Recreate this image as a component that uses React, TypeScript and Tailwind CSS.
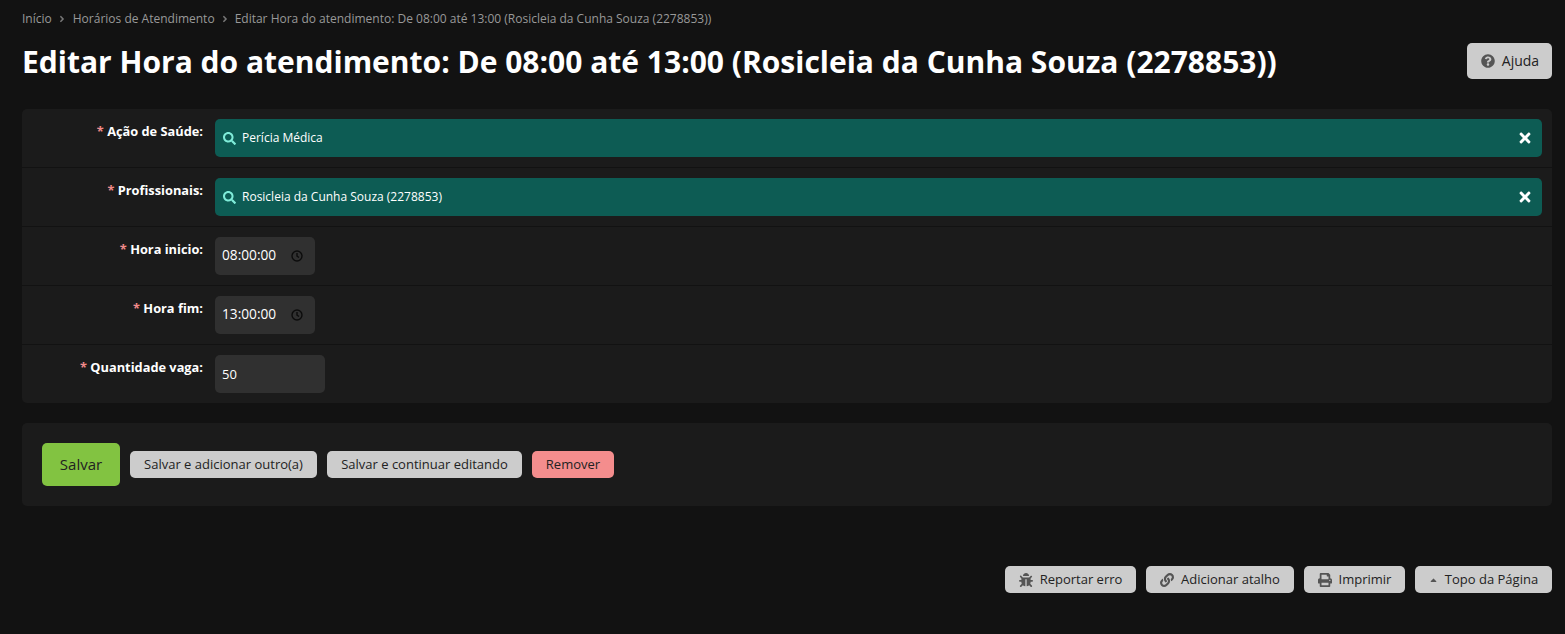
import React from "react";
import { FaSearch, FaTimes, FaQuestionCircle, FaBug, FaLink, FaPrint, FaCaretUp, FaAngleRight } from "react-icons/fa";

function Label({ text }: { text: string }) {
  return (
    <div className="w-[181px] shrink-0 text-right text-[12.8px] font-bold leading-[20px] text-white pt-[2px]">
      <span className="text-[#f08a8a]">* </span>
      {text}:
    </div>
  );
}

function Lookup({ text }: { text: string }) {
  return (
    <div className="flex-1 h-[38px] rounded-[5px] bg-[#0d5c54] flex items-center pl-[8px] pr-[9px] text-[12px] text-white">
      <FaSearch className="text-[#7fecd9] w-[13px] h-[13px] mr-[6px]" />
      <span className="flex-1">{text}</span>
      <FaTimes className="text-white w-[16px] h-[16px]" />
    </div>
  );
}

function Time({ value }: { value: string }) {
  return (
    <div className="w-[100px] h-[38px] rounded-[5px] bg-[#303030] flex items-center pl-[7px] text-[13.7px] text-white">
      <span className="w-[69px] pb-[1px]">{value}</span>
      <svg viewBox="0 0 12 12" className="w-[12px] h-[12px]" fill="none" stroke="#0c0c0c" strokeWidth="1.4">
        <circle cx="6" cy="6" r="5" />
        <path d="M6 3v3.2l2 1.3" />
      </svg>
    </div>
  );
}

function Row({ label, children, last }: { label: string; children: React.ReactNode; last?: boolean }) {
  return (
    <div className={`flex gap-[12px] px-0 pt-[10px] pb-[10px] ${last ? "" : "border-b border-[#121212]"}`}>
      <Label text={label} />
      {children}
    </div>
  );
}

export default function App() {
  const foot = "h-[27px] rounded-[5px] bg-[#cccccc] flex items-center justify-center gap-[7px] text-[13px] text-[#222222]";
  return (
    <div className="min-h-[634px] bg-[#121212] px-[22px] pr-[13px] font-['Open_Sans',sans-serif] overflow-hidden">
      <div className="flex items-center pt-[11px] h-[27px] text-[12px] text-[#999999]">
        <span>Início</span>
        <FaAngleRight className="ml-[5px] mr-[6px] w-[10px] h-[10px] text-[#777777]" />
        <span>Horários de Atendimento</span>
        <FaAngleRight className="mx-[5px] w-[10px] h-[10px] text-[#777777]" />
        <span>Editar Hora do atendimento: De 08:00 até 13:00 (Rosicleia da Cunha Souza (2278853))</span>
      </div>
      <div className="flex items-start justify-between pt-[16px] h-[82px]">
        <h1 className="text-[30px] font-bold leading-[38px] text-white">
          Editar Hora do atendimento: De 08:00 até 13:00 (Rosicleia da Cunha Souza (2278853))
        </h1>
        <div className="h-[36px] w-[85px] rounded-[5px] bg-[#cccccc] flex items-center justify-center gap-[7px] pl-[1px] text-[14px] text-[#222222]">
          <FaQuestionCircle className="w-[14px] h-[14px] text-[#555555]" />
          <span className="pb-[2px]">Ajuda</span>
        </div>
      </div>
      <div className="mr-0 rounded-[5px] bg-[#1b1b1b] w-[1530px]">
        <Row label="Ação de Saúde">
          <div className="flex-1 flex pr-[10px]"><Lookup text="Perícia Médica" /></div>
        </Row>
        <Row label="Profissionais">
          <div className="flex-1 flex pr-[10px]"><Lookup text="Rosicleia da Cunha Souza (2278853)" /></div>
        </Row>
        <Row label="Hora inicio">
          <Time value="08:00:00" />
        </Row>
        <Row label="Hora fim">
          <Time value="13:00:00" />
        </Row>
        <Row label="Quantidade vaga" last>
          <div className="w-[110px] h-[38px] rounded-[5px] bg-[#303030] flex items-center pl-[7px] pt-[1px] text-[13px] text-white">50</div>
        </Row>
      </div>
      <div className="mt-[20px] w-[1530px] h-[83px] rounded-[5px] bg-[#1b1b1b] flex items-center gap-[10px] pl-[20px] text-[13px] text-[#222222]">
        <div className="w-[78px] h-[43px] rounded-[5px] bg-[#82c341] flex items-center justify-center text-[15px]">Salvar</div>
        <div className="h-[27px] w-[187px] rounded-[5px] bg-[#cccccc] flex items-center justify-center pt-[1px]">Salvar e adicionar outro(a)</div>
        <div className="h-[27px] w-[195px] rounded-[5px] bg-[#cccccc] flex items-center justify-center pt-[1px]">Salvar e continuar editando</div>
        <div className="h-[27px] w-[82px] rounded-[5px] bg-[#f48d8d] flex items-center justify-center pt-[1px]">Remover</div>
      </div>
      <div className="mt-[60px] w-[1530px] flex justify-end gap-[10px]">
        <div className={`${foot} w-[131px]`}><FaBug className="w-[14px] h-[14px] text-[#555555]" />Reportar erro</div>
        <div className={`${foot} w-[148px]`}><FaLink className="w-[14px] h-[14px] text-[#555555]" />Adicionar atalho</div>
        <div className={`${foot} w-[101px]`}><FaPrint className="w-[14px] h-[14px] text-[#555555]" />Imprimir</div>
        <div className={`${foot} w-[137px]`}><FaCaretUp className="w-[9px] h-[10px] text-[#555555]" />Topo da Página</div>
      </div>
    </div>
  );
}
